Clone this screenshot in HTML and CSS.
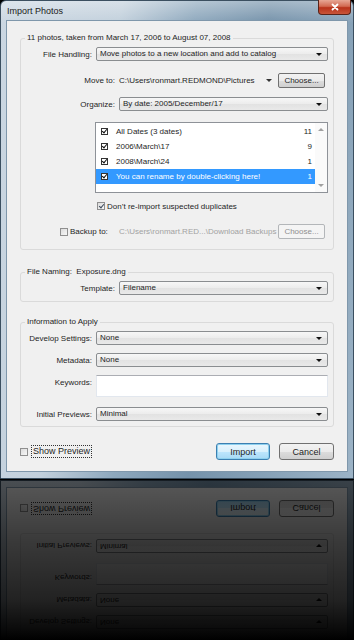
FILE: index.html
```html
<!DOCTYPE html>
<html lang="en">

<head>
    <meta charset="UTF-8">
    <meta name="viewport" content="width=device-width, initial-scale=1.0">
    <title>Import Photos</title>
    <link rel="stylesheet" href="styles.css">
</head>

<body>
    <div class="window">
        <div class="titlebar">
            <span class="title">Import Photos</span>
            <div class="close-btn">
                <svg width="10" height="8" viewBox="0 0 10 8"><path d="M2.5 1.5 L7.5 6.5 M7.5 1.5 L2.5 6.5" stroke="#fff" stroke-width="1.8" stroke-linecap="round"/></svg>
            </div>
        </div>

        <div class="client">
            <fieldset class="group group-source">
                <legend>11 photos, taken from March 17, 2006 to August 07, 2008</legend>

                <div class="field field-handling">
                    <label class="lbl lbl-short">File Handling:</label>
                    <div class="combo">Move photos to a new location and add to catalog</div>
                </div>

                <div class="field field-move">
                    <label class="lbl lbl-long">Move to:</label>
                    <span class="path">C:\Users\ronmart.REDMOND\Pictures</span>
                    <span class="path-arrow"></span>
                    <button type="button" class="btn btn-choose">Choose...</button>
                </div>

                <div class="field field-organize">
                    <label class="lbl lbl-long">Organize:</label>
                    <div class="combo">By date: 2005/December/17</div>
                </div>

                <div class="listbox">
                    <div class="list-rows">
                        <div class="list-row"><span class="tick"></span><span class="row-name">All Dates (3 dates)</span><span class="row-count">11</span></div>
                        <div class="list-row"><span class="tick"></span><span class="row-name">2006\March\17</span><span class="row-count">9</span></div>
                        <div class="list-row"><span class="tick"></span><span class="row-name">2008\March\24</span><span class="row-count">1</span></div>
                        <div class="list-row selected"><span class="tick"></span><span class="row-name">You can rename by double-clicking here!</span><span class="row-count">1</span></div>
                    </div>
                    <div class="scrollbar">
                        <span class="arrow-up"></span>
                        <span class="arrow-down"></span>
                    </div>
                </div>

                <div class="field field-dup">
                    <span class="checkbox checked"></span>
                    <span>Don’t re-import suspected duplicates</span>
                </div>

                <div class="field field-backup">
                    <div class="backup-check">
                        <span class="checkbox"></span>
                        <span>Backup to:</span>
                    </div>
                    <span class="path disabled">C:\Users\ronmart.RED...\Download Backups</span>
                    <button type="button" class="btn btn-choose" disabled>Choose...</button>
                </div>
            </fieldset>

            <fieldset class="group group-naming">
                <legend>File Naming:&nbsp; Exposure.dng</legend>
                <div class="field field-template">
                    <label class="lbl lbl-long">Template:</label>
                    <div class="combo">Filename</div>
                </div>
            </fieldset>

            <fieldset class="group group-info">
                <legend>Information to Apply</legend>
                <div class="field field-develop">
                    <label class="lbl lbl-short">Develop Settings:</label>
                    <div class="combo">None</div>
                </div>
                <div class="field field-metadata">
                    <label class="lbl lbl-short">Metadata:</label>
                    <div class="combo">None</div>
                </div>
                <div class="field field-keywords">
                    <label class="lbl lbl-short">Keywords:</label>
                    <div class="textbox"></div>
                </div>
                <div class="field field-previews">
                    <label class="lbl lbl-short">Initial Previews:</label>
                    <div class="combo">Minimal</div>
                </div>
            </fieldset>

            <div class="footer">
                <span class="checkbox"></span>
                <span class="show-preview">Show Preview</span>
                <button type="button" class="btn btn-big btn-default">Import</button>
                <button type="button" class="btn btn-big">Cancel</button>
            </div>
        </div>
    </div>

    <!-- mirrored lower part of the dialog (glass reflection) -->
    <div class="reflection" aria-hidden="true">
        <div class="window mirror">
            <div class="client">
                <div class="group group-info">
                    <div class="field field-develop">
                        <span class="lbl lbl-short">Develop Settings:</span>
                        <div class="combo">None</div>
                    </div>
                    <div class="field field-metadata">
                        <span class="lbl lbl-short">Metadata:</span>
                        <div class="combo">None</div>
                    </div>
                    <div class="field field-keywords">
                        <span class="lbl lbl-short">Keywords:</span>
                        <div class="textbox"></div>
                    </div>
                    <div class="field field-previews">
                        <span class="lbl lbl-short">Initial Previews:</span>
                        <div class="combo">Minimal</div>
                    </div>
                </div>

                <div class="footer">
                    <span class="checkbox"></span>
                    <span class="show-preview">Show Preview</span>
                    <span class="btn btn-big btn-default">Import</span>
                    <span class="btn btn-big">Cancel</span>
                </div>
            </div>
        </div>
    </div>
</body>

</html>
```

FILE: styles.css
```css
html,
body {
    background-color: #000000;
}

body {
    margin: 0;
    padding: 0;
    font-family: "Liberation Sans", Arial, sans-serif;
    font-size: 8px;
    color: #1e1e1e;
}

/* Window frame (aero glass look) */
.window {
    box-sizing: border-box;
    width: 354px;
    height: 479px;
    border: 1px solid #3b4f60;
    border-radius: 6px 6px 0 0;
    padding: 0 5px 6px 5px;
    display: flex;
    flex-direction: column;
    background-image:
        linear-gradient(180deg, rgba(255, 255, 255, 0.35), rgba(255, 255, 255, 0) 22px),
        linear-gradient(100deg, #cbd7e2 0%, #c2d0dc 28%, #8ea8bd 45%, #7592aa 62%, #86a1b7 80%, #9cb3c6 100%);
}

.titlebar {
    height: 19px;
    display: flex;
    align-items: flex-start;
    justify-content: space-between;
    flex-shrink: 0;
}

.title {
    font-size: 9px;
    color: #1b1b1b;
    margin-top: 5px;
    margin-left: 1px;
}

.close-btn {
    width: 31px;
    height: 14px;
    margin-right: -3px;
    margin-top: -1px;
    border: 1px solid #5a2318;
    border-top: none;
    border-radius: 0 0 4px 4px;
    background: linear-gradient(180deg, #e7a795 0%, #d26a52 45%, #b8321a 55%, #c9563a 100%);
    display: flex;
    align-items: center;
    justify-content: center;
}

.client {
    flex: 1;
    background-color: #f0f0f0;
    border: 1px solid #7f97ab;
    padding: 12px 13px 0 13px;
}

/* Reflection under the dialog */
.reflection {
    width: 354px;
    height: 160px;
    margin-top: 1px;
    overflow: hidden;
    display: flex;
    flex-direction: column;
    justify-content: flex-end;
    transform: scaleY(-1);
    position: relative;
}

.reflection::after {
    content: "";
    position: absolute;
    inset: 0;
    background: linear-gradient(180deg, #000000 0%, rgba(0, 0, 0, 0.96) 6%, rgba(0, 0, 0, 0.86) 25%, rgba(0, 0, 0, 0.76) 62%, rgba(0, 0, 0, 0.63) 100%);
}

.mirror {
    height: auto;
    flex-shrink: 0;
    border-top: none;
    border-radius: 0;
    background-image: linear-gradient(100deg, #cbd7e2 0%, #c2d0dc 28%, #8ea8bd 45%, #7592aa 62%, #86a1b7 80%, #9cb3c6 100%);
}

.mirror .client {
    padding-top: 0;
    padding-bottom: 12px;
}

.mirror .group-info {
    margin-top: 0;
    padding-top: 8px;
}

.mirror .btn {
    display: flex;
    align-items: center;
    justify-content: center;
}

/* Group boxes */
.group {
    margin: 0;
    padding: 0;
    border: 1px solid #dadada;
    border-radius: 3px;
    min-width: 0;
}

.group legend {
    margin-left: 4px;
    padding: 0 2px;
    line-height: 10px;
    color: #1e1e1e;
}

.group-source {
    padding-bottom: 10px;
}

.group-naming {
    margin-top: 17px;
    padding-bottom: 6px;
}

.group-info {
    margin-top: 15px;
    padding-bottom: 5px;
}

/* Rows */
.field {
    display: flex;
    align-items: center;
    padding-right: 5px;
}

.lbl {
    flex-shrink: 0;
    text-align: right;
    padding-right: 4px;
    box-sizing: border-box;
}

.lbl-short {
    width: 75px;
}

.lbl-long {
    width: 98px;
}

.combo {
    flex: 1;
    height: 14px;
    box-sizing: border-box;
    border: 1px solid #8a8d90;
    border-radius: 2px;
    background: linear-gradient(180deg, #f7f7f7 0%, #ececec 50%, #e2e2e2 51%, #e9e9e9 100%);
    padding-left: 3px;
    line-height: 12px;
    position: relative;
    white-space: nowrap;
}

.combo::after {
    content: "";
    position: absolute;
    right: 5px;
    top: 5px;
    border-left: 3px solid transparent;
    border-right: 3px solid transparent;
    border-top: 3px solid #111111;
}

.field-handling {
    margin-top: 4px;
}

.field-move {
    margin-top: 12px;
    padding-right: 8px;
}

.path {
    flex: 1;
    white-space: nowrap;
}

.path.disabled {
    color: #a2a2a2;
}

.path-arrow {
    width: 0;
    height: 0;
    border-left: 3px solid transparent;
    border-right: 3px solid transparent;
    border-top: 3px solid #333333;
    margin-right: 6px;
}

.field-organize {
    margin-top: 9px;
}

/* Buttons */
.btn {
    font-family: "Liberation Sans", Arial, sans-serif;
    font-size: 8px;
    color: #1e1e1e;
    box-sizing: border-box;
    border: 1px solid #707070;
    border-radius: 2px;
    background: linear-gradient(180deg, #f2f2f2 0%, #ebebeb 50%, #dddddd 51%, #cfcfcf 100%);
    padding: 0;
    margin: 0;
}

.btn-choose {
    width: 47px;
    height: 15px;
}

.btn-choose:disabled {
    border-color: #b3b6b9;
    background: #f4f4f4;
    color: #8f8f8f;
}

.btn-big {
    height: 17px;
    width: 55px;
    font-size: 9px;
    border-radius: 3px;
}

.btn-default {
    border-color: #3c7fb1;
    background: linear-gradient(180deg, #eaf6fd 0%, #d9f0fc 50%, #bee6fd 51%, #a7d9f5 100%);
    box-shadow: inset 0 0 0 1px #8ed0ee;
    margin-left: auto;
    width: 54px;
}

/* List of dates */
.listbox {
    display: flex;
    margin: 11px 5px 0 74px;
    height: 71px;
    box-sizing: border-box;
    border: 1px solid #8e9298;
    background-color: #ffffff;
}

.list-rows {
    flex: 1;
    padding-top: 1px;
}

.list-row {
    display: flex;
    align-items: center;
    height: 15px;
    padding: 0 3px 0 5px;
}

.list-row.selected {
    background-color: #3399ff;
    color: #ffffff;
}

.tick {
    width: 7px;
    height: 7px;
    box-sizing: border-box;
    border: 1px solid #333333;
    background-color: #ffffff;
    position: relative;
    margin-right: 8px;
}

.tick::after {
    content: "";
    position: absolute;
    left: 1px;
    top: -1px;
    width: 2px;
    height: 4px;
    border-right: 1.5px solid #111111;
    border-bottom: 1.5px solid #111111;
    transform: rotate(40deg);
}

.row-name {
    flex: 1;
    white-space: nowrap;
}

.scrollbar {
    width: 12px;
    display: flex;
    flex-direction: column;
    justify-content: space-between;
    align-items: center;
    padding: 5px 0 5px 0;
    background-color: #fafafa;
}

.arrow-up {
    border-left: 3px solid transparent;
    border-right: 3px solid transparent;
    border-bottom: 3px solid #a0a0a0;
}

.arrow-down {
    border-left: 3px solid transparent;
    border-right: 3px solid transparent;
    border-top: 3px solid #a0a0a0;
}

/* Checkboxes */
.checkbox {
    width: 8px;
    height: 8px;
    box-sizing: border-box;
    border: 1px solid #8f8f8f;
    background: linear-gradient(135deg, #dcdcdc, #f7f7f7);
    position: relative;
    flex-shrink: 0;
}

.checkbox.checked::after {
    content: "";
    position: absolute;
    left: 2px;
    top: 0;
    width: 2px;
    height: 4px;
    border-right: 1px solid #3b4a5c;
    border-bottom: 1px solid #3b4a5c;
    transform: rotate(40deg);
}

.field-dup {
    margin-top: 8px;
    padding-left: 76px;
    gap: 2px;
    height: 10px;
}

.field-backup {
    margin-top: 13px;
    padding-right: 8px;
}

.backup-check {
    width: 98px;
    padding-left: 39px;
    box-sizing: border-box;
    display: flex;
    align-items: center;
    gap: 2px;
    flex-shrink: 0;
}

.field-template {
    margin-top: 4px;
}

.field-develop {
    margin-top: 4px;
}

.field-metadata {
    margin-top: 8px;
}

.field-keywords {
    margin-top: 8px;
    align-items: flex-start;
}

.field-keywords .lbl {
    padding-top: 3px;
}

.textbox {
    flex: 1;
    height: 22px;
    box-sizing: border-box;
    background-color: #ffffff;
    border: 1px solid #e2e7ee;
    border-top-color: #abadb3;
}

.field-previews {
    margin-top: 10px;
}

/* Bottom bar */
.footer {
    display: flex;
    align-items: center;
    margin-top: 16px;
    gap: 3px;
}

.show-preview {
    font-size: 9px;
    border: 1px dotted #333333;
    padding: 0 1px;
    line-height: 11px;
}

.footer .btn-big + .btn-big {
    margin-left: 6px;
}
```
